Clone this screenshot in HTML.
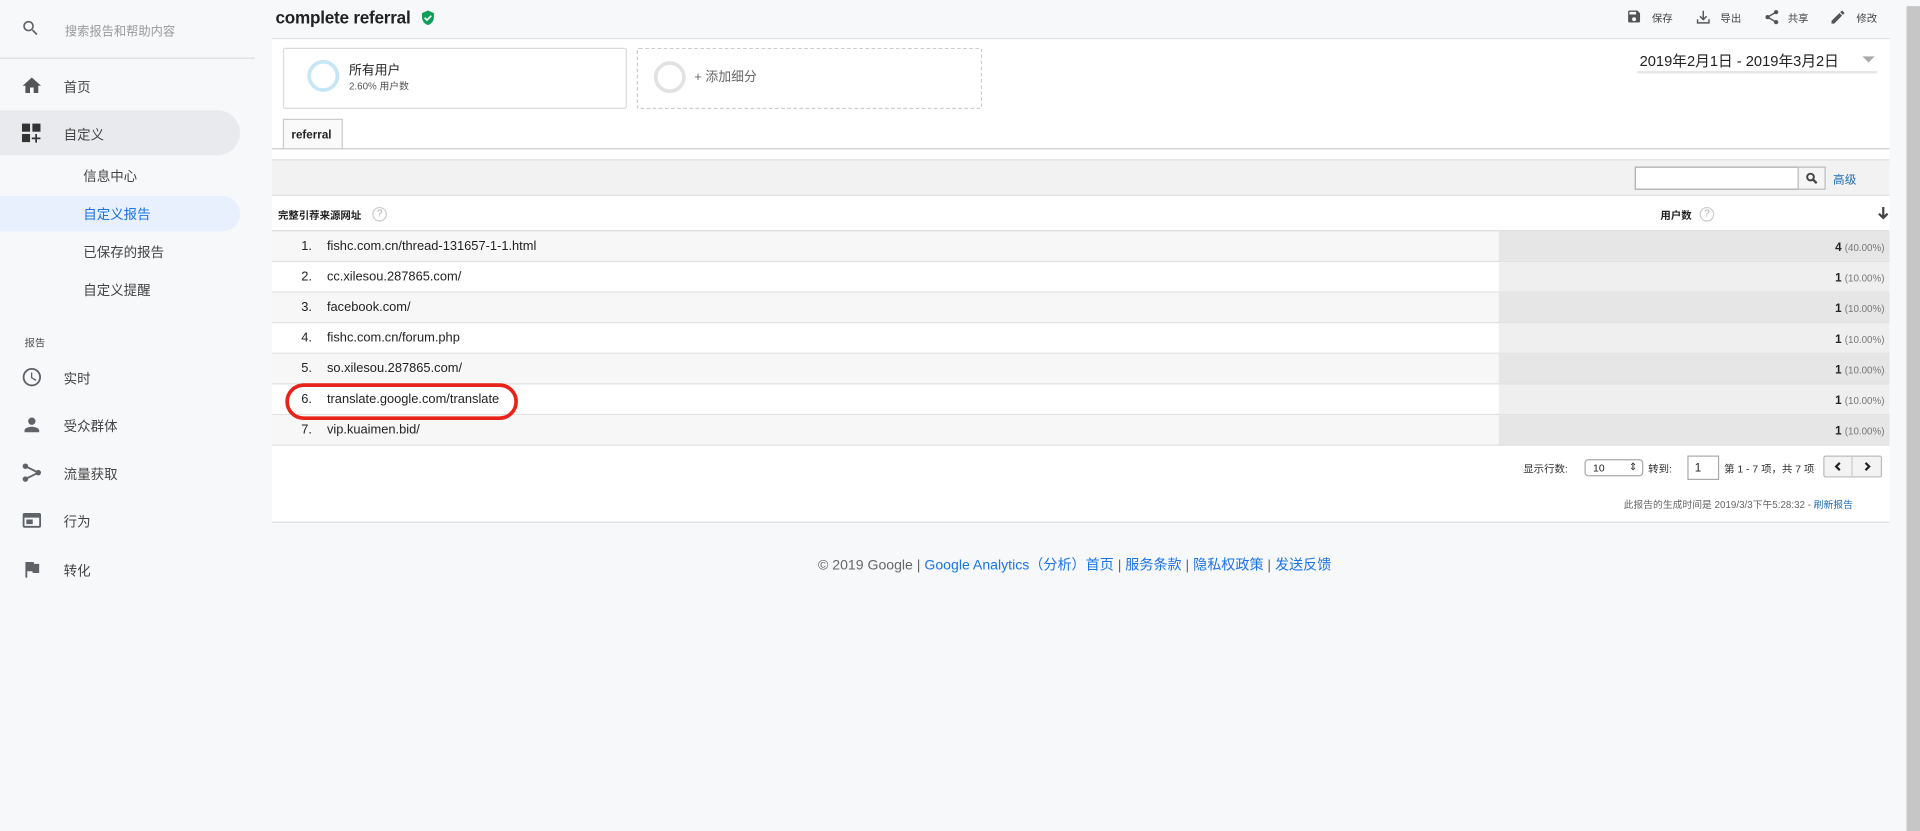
<!DOCTYPE html>
<html><head><meta charset="utf-8"><style>
*{margin:0;padding:0;box-sizing:border-box}
html,body{width:1920px;height:831px;overflow:hidden;background:#f7f8fa}
#w{width:1568px;height:679px;transform:scale(1.22449);transform-origin:0 0;position:relative;font-family:"Liberation Sans","Noto Sans CJK SC",sans-serif;color:#222}
.a{position:absolute}
.sb{color:#444;font-size:11px}
.ic{position:absolute;fill:#5f6368}
.row{position:absolute;left:222px;width:1321px;height:25px;border-bottom:1px solid #e0e0e0;font-size:10.5px}
.row .n{position:absolute;left:24px;top:6px}
.row .u{position:absolute;left:45px;top:6px}
.row .m{position:absolute;left:1002px;top:0;width:319px;height:24px}
.row .v{position:absolute;right:4px;top:8px;font-size:9px}
.row .v b{font-size:9.5px}
.row .v span{color:#777;font-size:8px}
</style></head><body><div id="w">
<svg class="ic" style="left:17px;top:15px" width="16" height="16" viewBox="0 0 24 24"><path d="M15.5 14h-.8l-.3-.3A6.5 6.5 0 1 0 9.5 16a6.5 6.5 0 0 0 4.2-1.6l.3.3v.8l5 5 1.5-1.5-5-5zm-6 0A4.5 4.5 0 1 1 14 9.5 4.5 4.5 0 0 1 9.5 14z"/></svg>
<div class="a" style="left:53px;top:17px;font-size:10px;color:#999">搜索报告和帮助内容</div>
<div class="a" style="left:0;top:47px;width:208px;height:1px;background:#dadce0"></div>
<svg class="ic" style="left:17px;top:61px;fill:#555" width="18" height="18" viewBox="0 0 24 24"><path d="M10 20v-6h4v6h5v-8h3L12 3 2 12h3v8z"/></svg>
<div class="a sb" style="left:52px;top:63px">首页</div>
<div class="a" style="left:0;top:90px;width:196px;height:37px;background:#e8eaed;border-radius:0 19px 19px 0"></div>
<svg class="ic" style="left:17px;top:100px;fill:#333" width="17" height="17" viewBox="0 0 18 18"><rect x="1" y="1" width="7" height="7"/><rect x="10" y="1" width="7" height="7"/><rect x="1" y="10" width="7" height="7"/><path d="M12.5 10h1.5v3h3v1.5h-3v3h-1.5v-3h-3V13h3z"/></svg>
<div class="a sb" style="left:52px;top:102px">自定义</div>
<div class="a sb" style="left:68px;top:136px">信息中心</div>
<div class="a" style="left:0;top:160px;width:196px;height:29px;background:#e8f0fe;border-radius:0 15px 15px 0"></div>
<div class="a sb" style="left:68px;top:167px;color:#1a73e8">自定义报告</div>
<div class="a sb" style="left:68px;top:198px">已保存的报告</div>
<div class="a sb" style="left:68px;top:229px">自定义提醒</div>
<div class="a" style="left:20px;top:274px;font-size:8.5px;color:#555">报告</div>
<svg class="ic" style="left:17px;top:299px" width="18" height="18" viewBox="0 0 24 24"><path d="M12 2a10 10 0 1 0 0 20 10 10 0 0 0 0-20zm0 18a8 8 0 1 1 0-16 8 8 0 0 1 0 16zm.5-13H11v6l5.2 3.2.8-1.3-4.5-2.7z"/></svg>
<div class="a sb" style="left:52px;top:301px">实时</div>
<svg class="ic" style="left:17px;top:338px" width="18" height="18" viewBox="0 0 24 24"><path d="M12 12a4 4 0 1 0 0-8 4 4 0 0 0 0 8zm0 2c-2.7 0-8 1.3-8 4v2h16v-2c0-2.7-5.3-4-8-4z"/></svg>
<div class="a sb" style="left:52px;top:340px">受众群体</div>
<svg class="ic" style="left:17px;top:377px" width="18" height="18" viewBox="0 0 24 24"><circle cx="5" cy="5" r="3"/><circle cx="5" cy="19" r="3"/><circle cx="19" cy="12" r="3"/><path d="M5 5l14 7L5 19" stroke="#5f6368" stroke-width="2" fill="none"/></svg>
<div class="a sb" style="left:52px;top:379px">流量获取</div>
<svg class="ic" style="left:17px;top:416px" width="18" height="18" viewBox="0 0 24 24"><path d="M20 4H4a2 2 0 0 0-2 2v12a2 2 0 0 0 2 2h16a2 2 0 0 0 2-2V6a2 2 0 0 0-2-2zm0 14H4V9h16zM6 11h7v5H6z"/></svg>
<div class="a sb" style="left:52px;top:418px">行为</div>
<svg class="ic" style="left:17px;top:456px" width="18" height="18" viewBox="0 0 24 24"><path d="M14.4 6L14 4H5v17h2v-7h5.6l.4 2h7V6z"/></svg>
<div class="a sb" style="left:52px;top:458px">转化</div>
<div class="a" style="left:225px;top:6px;font-size:14px;font-weight:bold;color:#222;letter-spacing:-0.2px">complete referral</div>
<svg class="a" style="left:343px;top:7px" width="13" height="15" viewBox="0 0 24 24"><path fill="#0f9d58" d="M12 1L3 5v6c0 5.5 3.8 10.7 9 12 5.2-1.3 9-6.5 9-12V5z"/><path d="M7 12l3.5 3.5L17 9" stroke="#fff" stroke-width="2.5" fill="none"/></svg>
<svg class="ic" style="left:1328px;top:7px;fill:#555" width="13" height="13" viewBox="0 0 24 24"><path d="M17 3H5a2 2 0 0 0-2 2v14a2 2 0 0 0 2 2h14a2 2 0 0 0 2-2V7zm-5 16a3 3 0 1 1 0-6 3 3 0 0 1 0 6zm3-10H5V5h10z"/></svg>
<div class="a" style="left:1349px;top:9px;font-size:8.5px;color:#444">保存</div>
<svg class="ic" style="left:1384px;top:7px;fill:#555" width="14" height="14" viewBox="0 0 24 24"><path d="M11 3h2v10l3-3 1.4 1.4L12 16.8 6.6 11.4 8 10l3 3zM3 15h2v4h14v-4h2v6H3z"/></svg>
<div class="a" style="left:1405px;top:9px;font-size:8.5px;color:#444">导出</div>
<svg class="ic" style="left:1440px;top:7px;fill:#555" width="14" height="14" viewBox="0 0 24 24"><circle cx="18" cy="5" r="3"/><circle cx="6" cy="12" r="3"/><circle cx="18" cy="19" r="3"/><path d="M18 5L6 12l12 7" stroke="#555" stroke-width="2" fill="none"/></svg>
<div class="a" style="left:1460px;top:9px;font-size:8.5px;color:#444">共享</div>
<svg class="ic" style="left:1494px;top:7px;fill:#555" width="14" height="14" viewBox="0 0 24 24"><path d="M3 17.2V21h3.8L17.8 9.9l-3.7-3.7zM20.7 7a1 1 0 0 0 0-1.4l-2.3-2.3a1 1 0 0 0-1.4 0l-1.8 1.8 3.7 3.7z"/></svg>
<div class="a" style="left:1516px;top:9px;font-size:8.5px;color:#444">修改</div>
<div class="a" style="left:1557px;top:5px;width:11px;height:674px;background:#c6c6c6"></div>
<div class="a" style="left:222px;top:31px;width:1321px;height:396px;background:#fff;border-top:1px solid #e0e0e0;border-bottom:1px solid #dcdcdc"></div>
<div class="a" style="left:231px;top:39px;width:281px;height:50px;border:1px solid #dadce0;border-radius:2px"></div>
<div class="a" style="left:251px;top:49px;width:26px;height:26px;border:3px solid #c6e6f5;border-radius:50%"></div>
<div class="a" style="left:285px;top:50px;font-size:10.5px">所有用户</div>
<div class="a" style="left:285px;top:65px;font-size:8px;color:#555">2.60% 用户数</div>
<div class="a" style="left:520px;top:39px;width:282px;height:50px;border:1px dashed #ccc;border-radius:2px"></div>
<div class="a" style="left:534px;top:50px;width:26px;height:26px;border:3px solid #e2e2e2;border-radius:50%"></div>
<div class="a" style="left:567px;top:55px;font-size:10.5px;color:#666">+ 添加细分</div>
<div class="a" style="left:1339px;top:41px;font-size:12px;color:#222">2019年2月1日 - 2019年3月2日</div>
<div class="a" style="left:1521px;top:46px;border-left:5px solid transparent;border-right:5px solid transparent;border-top:5px solid #aaa"></div>
<div class="a" style="left:1337px;top:58px;width:196px;height:2px;background:#e6e6e6"></div>
<div class="a" style="left:231px;top:97px;width:49px;height:25px;border:1px solid #ccc;border-bottom:none;background:#fafafa;font-size:9.5px;font-weight:bold;padding:7px 0 0 6px">referral</div>
<div class="a" style="left:222px;top:121px;width:1321px;height:1px;background:#c8c8c8"></div>
<div class="a" style="left:222px;top:130px;width:1321px;height:30px;background:#f2f2f2;border-top:1px solid #e0e0e0;border-bottom:1px solid #e0e0e0"></div>
<div class="a" style="left:1335px;top:136px;width:134px;height:19px;border:1px solid #aaa;background:#fff"></div>
<div class="a" style="left:1468px;top:136px;width:23px;height:19px;border:1px solid #bbb;background:#f5f5f5"></div>
<svg class="a" style="left:1474px;top:140px" width="11" height="11" viewBox="0 0 24 24"><circle cx="10" cy="10" r="6" stroke="#444" stroke-width="3.5" fill="none"/><path d="M14 14l7 7" stroke="#444" stroke-width="4"/></svg>
<div class="a" style="left:1497px;top:139px;font-size:9.5px;color:#1c6bb5">高级</div>
<div class="a" style="left:227px;top:170px;font-size:8.5px;font-weight:bold">完整引荐来源网址</div>
<div class="a" style="left:304px;top:169px;width:12px;height:12px;border:1px solid #ccc;border-radius:50%;font-size:8px;color:#aaa;text-align:center;line-height:10px">?</div>
<div class="a" style="left:1356px;top:170px;font-size:8.5px;font-weight:bold">用户数</div>
<div class="a" style="left:1388px;top:169px;width:12px;height:12px;border:1px solid #ccc;border-radius:50%;font-size:8px;color:#aaa;text-align:center;line-height:10px">?</div>
<svg class="a" style="left:1533px;top:168px" width="10" height="12" viewBox="0 0 10 12"><path d="M5 1v9M1.5 6.5L5 10l3.5-3.5" stroke="#444" stroke-width="1.8" fill="none"/></svg>
<div class="a" style="left:222px;top:188px;width:1321px;height:1px;background:#d8d8d8"></div>
<div class="row" style="top:189px;background:#f7f7f7"><span class="n">1.</span><span class="u">fishc.com.cn/thread-131657-1-1.html</span><div class="m" style="background:#e6e6e6"><span class="v"><b>4</b> <span>(40.00%)</span></span></div></div>
<div class="row" style="top:214px"><span class="n">2.</span><span class="u">cc.xilesou.287865.com/</span><div class="m" style="background:#efefef"><span class="v"><b>1</b> <span>(10.00%)</span></span></div></div>
<div class="row" style="top:239px;background:#f7f7f7"><span class="n">3.</span><span class="u">facebook.com/</span><div class="m" style="background:#e6e6e6"><span class="v"><b>1</b> <span>(10.00%)</span></span></div></div>
<div class="row" style="top:264px"><span class="n">4.</span><span class="u">fishc.com.cn/forum.php</span><div class="m" style="background:#efefef"><span class="v"><b>1</b> <span>(10.00%)</span></span></div></div>
<div class="row" style="top:289px;background:#f7f7f7"><span class="n">5.</span><span class="u">so.xilesou.287865.com/</span><div class="m" style="background:#e6e6e6"><span class="v"><b>1</b> <span>(10.00%)</span></span></div></div>
<div class="row" style="top:314px"><span class="n">6.</span><span class="u">translate.google.com/translate</span><div class="m" style="background:#efefef"><span class="v"><b>1</b> <span>(10.00%)</span></span></div></div>
<div class="row" style="top:339px;background:#f7f7f7"><span class="n">7.</span><span class="u">vip.kuaimen.bid/</span><div class="m" style="background:#e6e6e6"><span class="v"><b>1</b> <span>(10.00%)</span></span></div></div>
<div class="a" style="left:233px;top:313px;width:190px;height:30px;border:3px solid #e8231a;border-radius:15px"></div>
<div class="a" style="left:1244px;top:377px;font-size:8.5px;color:#333">显示行数:</div>
<div class="a" style="left:1294px;top:375px;width:48px;height:14px;border:1px solid #aaa;border-radius:3px;font-size:8.5px;padding:1px 0 0 6px">10<span style="position:absolute;right:4px;top:1px;font-size:8px">⇕</span></div>
<div class="a" style="left:1346px;top:377px;font-size:8.5px;color:#333">转到:</div>
<div class="a" style="left:1378px;top:372px;width:26px;height:20px;border:1px solid #aaa;font-size:9.5px;padding:4px 0 0 5px">1</div>
<div class="a" style="left:1408px;top:377px;font-size:8.5px;color:#333">第 1 - 7 项，共 7 项</div>
<div class="a" style="left:1489px;top:372px;width:48px;height:18px;border:1px solid #bbb;border-radius:2px;background:#f3f3f3"></div>
<div class="a" style="left:1512px;top:372px;width:1px;height:18px;background:#ccc"></div>
<svg class="a" style="left:1497px;top:377px" width="8" height="8" viewBox="0 0 8 8"><path d="M5.5 1L2.5 4l3 3" stroke="#222" stroke-width="1.8" fill="none"/></svg>
<svg class="a" style="left:1521px;top:377px" width="8" height="8" viewBox="0 0 8 8"><path d="M2.5 1l3 3-3 3" stroke="#222" stroke-width="1.8" fill="none"/></svg>
<div class="a" style="left:1326px;top:407px;font-size:8px;color:#666">此报告的生成时间是 2019/3/3下午5:28:32 - <span style="color:#1c6bb5">刷新报告</span></div>
<div class="a" style="left:668px;top:453px;font-size:11.5px;color:#666">© 2019 Google | <span style="color:#1a73e8">Google Analytics（分析）首页</span> | <span style="color:#1a73e8">服务条款</span> | <span style="color:#1a73e8">隐私权政策</span> | <span style="color:#1a73e8">发送反馈</span></div>
</div></body></html>
